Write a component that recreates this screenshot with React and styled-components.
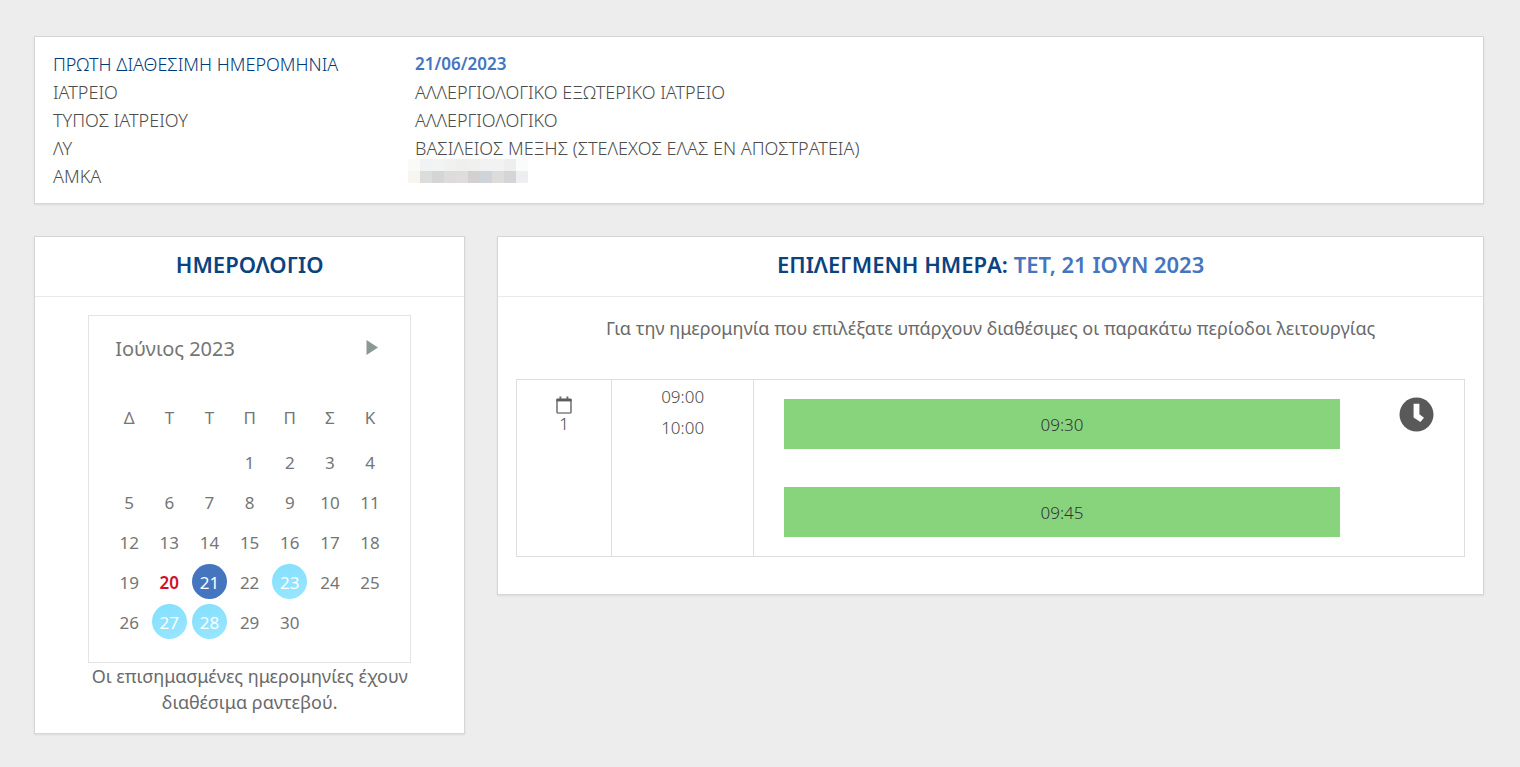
import React, { useState } from 'react';
import styled, { createGlobalStyle } from 'styled-components';

const GlobalStyle = createGlobalStyle`
  * {
    box-sizing: border-box;
  }
  body {
    margin: 0;
    background-color: #ededed;
    color: #4c4c4c;
    font-family: 'Noto Sans', 'Open Sans', sans-serif;
    font-size: 17px;
    font-weight: 300;
  }
  button {
    font: inherit;
    color: inherit;
    padding: 0;
    border: none;
    background: none;
    cursor: pointer;
  }
`;

const Page = styled.main`
  display: flex;
  flex-direction: column;
  gap: 32px;
  padding: 36px 36px 32px 34px;
`;

const Card = styled.section`
  background-color: #fff;
  border: 1px solid #d6d6d6;
  box-shadow: 0 1px 2px rgba(0, 0, 0, 0.08);
`;

const CardHeader = styled.h2`
  margin: 0;
  padding: 11px 18px 16px;
  border-bottom: 1px solid #e9e9e9;
  color: #0b4380;
  font-size: 22px;
  font-weight: 600;
  line-height: 32px;
  text-align: center;
`;

const SelectedDate = styled.span`
  color: #4675c0;
`;

const InfoList = styled.dl`
  margin: 0;
  padding: 13px 0;
`;

const InfoRow = styled.div`
  display: grid;
  grid-template-columns: 1fr 3fr;
  color: ${({ $main }) => ($main ? '#003a7a' : 'inherit')};
  font-size: 18px;
  line-height: 28px;
`;

const InfoLabel = styled.dt`
  padding-left: 18px;
`;

const InfoValue = styled.dd`
  margin: 0;
  padding-left: 18px;
  color: ${({ $main }) => ($main ? '#4675c0' : 'inherit')};
  font-size: ${({ $main }) => ($main ? '17px' : 'inherit')};
  font-weight: ${({ $main }) => ($main ? 600 : 300)};
`;

const Masked = styled.svg`
  display: block;
  margin: -3px 0 0 -7px;
`;

const Columns = styled.div`
  display: grid;
  grid-template-columns: minmax(360px, 431fr) 986fr;
  align-items: start;
  gap: 32px;
`;

const CardBody = styled.div`
  padding: ${({ $wide }) => ($wide ? '18px 18px 37px' : '18px')};
`;

const Calendar = styled.div`
  width: 323px;
  margin: 0 auto;
  padding: 17px 20px 21px;
  border: 1px solid #e3e3e3;
`;

const MonthBar = styled.div`
  display: flex;
  justify-content: space-between;
  align-items: center;
  height: 30px;
  margin-bottom: 33px;
  padding: 0 12px 0 6px;
  color: #757575;
  font-size: 20px;
  font-weight: 400;
`;

const NextButton = styled.button`
  display: flex;
`;

const Days = styled.table`
  width: 100%;
  table-layout: fixed;
  border-collapse: collapse;
  color: #757575;
  font-size: 17px;
  font-weight: 400;
  text-align: center;

  th,
  td {
    height: 40px;
    padding: 0;
    font-weight: 400;
  }
  th {
    height: 45px;
    padding-bottom: 3px;
  }
`;

const dayStyles = {
  today: 'color: #d0112b; font-weight: 600;',
  selected: 'color: #fff; background: #4675c0;',
  free: 'color: #fff; background: linear-gradient(160deg, #83dffe, #9ae6ff);',
};

const Day = styled.button`
  display: block;
  width: 35px;
  height: 35px;
  margin: 0 auto;
  padding-top: 2px;
  border-radius: 50%;
  line-height: 33px;
  ${({ $kind }) => dayStyles[$kind]}
`;

const Note = styled.p`
  margin: 0;
  color: #6a6a6a;
  font-size: 18px;
  font-weight: 400;
  line-height: 26px;
  text-align: center;
`;

const Schedule = styled.table`
  width: 100%;
  margin-top: 38px;
  table-layout: fixed;
  border-collapse: collapse;
  text-align: center;

  td {
    padding: 0;
    border: 1px solid #dedede;
    vertical-align: top;
  }
  td:nth-child(3) {
    border-right: none;
  }
  td:nth-child(4) {
    border-left: none;
  }
`;

const CountCell = styled.div`
  display: flex;
  flex-direction: column;
  align-items: center;
  padding-top: 16px;
  line-height: 20px;
`;

const Hours = styled.div`
  padding-top: 1px;
  line-height: 31px;
`;

const Slots = styled.div`
  display: flex;
  flex-direction: column;
  gap: 38px;
  padding: 19px 30px;
`;

const Slot = styled.button`
  height: 50px;
  background-color: #88d47d;
  color: #333;
`;

const ClockCell = styled.div`
  display: flex;
  justify-content: center;
  padding-top: 17px;
`;

const info = [
  { label: 'ΠΡΩΤΗ ΔΙΑΘΕΣΙΜΗ ΗΜΕΡΟΜΗΝΙΑ', value: '21/06/2023', main: true },
  { label: 'ΙΑΤΡΕΙΟ', value: 'ΑΛΛΕΡΓΙΟΛΟΓΙΚΟ ΕΞΩΤΕΡΙΚΟ ΙΑΤΡΕΙΟ' },
  { label: 'ΤΥΠΟΣ ΙΑΤΡΕΙΟΥ', value: 'ΑΛΛΕΡΓΙΟΛΟΓΙΚΟ' },
  { label: 'ΛΥ', value: 'ΒΑΣΙΛΕΙΟΣ ΜΕΞΗΣ (ΣΤΕΛΕΧΟΣ ΕΛΑΣ ΕΝ ΑΠΟΣΤΡΑΤΕΙΑ)' },
  { label: 'ΑΜΚΑ', value: null },
];

const maskColors = [
  ['#fafaf9', '#f0f2f4', '#f2f3f3', '#f1f1f0', '#efefee', '#f0f0f0', '#f2f2f2', '#f2f2f2', '#eeeeee', '#fafcfb'],
  ['#f8f5f0', '#dadddc', '#d5d5d6', '#dddbdc', '#dfdcde', '#d2d1cf', '#ced4da', '#dedcda', '#d5d5d7', '#eceef0'],
];

const weekdays = ['Δ', 'Τ', 'Τ', 'Π', 'Π', 'Σ', 'Κ'];

const weeks = [
  [null, null, null, 1, 2, 3, 4],
  [5, 6, 7, 8, 9, 10, 11],
  [12, 13, 14, 15, 16, 17, 18],
  [19, 20, 21, 22, 23, 24, 25],
  [26, 27, 28, 29, 30, null, null],
];

const freeDays = [21, 23, 27, 28];
const today = 20;

const MaskedNumber = () => (
  <Masked width="120" height="24" shapeRendering="crispEdges" aria-hidden="true">
    {maskColors.map((row, y) =>
      row.map((fill, x) => (
        <rect key={`${x}-${y}`} x={x * 12} y={y * 12} width="12" height="12" fill={fill} />
      ))
    )}
  </Masked>
);

const CalendarIcon = () => (
  <svg width="16" height="18" viewBox="0 0 16 18" fill="none" aria-hidden="true">
    <rect x="1" y="3.4" width="14" height="13.6" rx="1" stroke="#808080" strokeWidth="1.7" />
    <path d="M0.4 2.8h15.2v2.6H0.4z" fill="#5c5c5c" />
    <path d="M4.4 0.4v3M11.4 0.4v3" stroke="#6a6a6a" strokeWidth="1.9" />
  </svg>
);

const ClockIcon = () => (
  <svg width="35" height="35" viewBox="0 0 35 35" aria-hidden="true">
    <circle cx="17.5" cy="17.5" r="17" fill="#595959" />
    <path d="M14.6 6.8h5.8v10.4l4.6 3.6l-3.6 4.2l-6.8-4.4z" fill="#fff" />
  </svg>
);

const App = () => {
  const [selected, setSelected] = useState(21);

  const kindOf = (day) => {
    if (day === selected) return 'selected';
    if (day === today) return 'today';
    return freeDays.includes(day) ? 'free' : undefined;
  };

  return (
    <Page>
      <GlobalStyle />
      <Card>
        <InfoList>
          {info.map(({ label, value, main }) => (
            <InfoRow key={label} $main={main}>
              <InfoLabel>{label}</InfoLabel>
              <InfoValue $main={main}>{value || <MaskedNumber />}</InfoValue>
            </InfoRow>
          ))}
        </InfoList>
      </Card>

      <Columns>
        <Card>
          <CardHeader>ΗΜΕΡΟΛΟΓΙΟ</CardHeader>
          <CardBody>
            <Calendar>
              <MonthBar>
                <span>Ιούνιος 2023</span>
                <NextButton type="button" aria-label="Επόμενος μήνας">
                  <svg width="12" height="16" viewBox="0 0 12 16">
                    <path d="M0.5 0L12 7.5L0.5 15z" fill="#8a9896" />
                  </svg>
                </NextButton>
              </MonthBar>
              <Days>
                <thead>
                  <tr>
                    {weekdays.map((name, index) => (
                      <th key={index} scope="col">{name}</th>
                    ))}
                  </tr>
                </thead>
                <tbody>
                  {weeks.map((week, index) => (
                    <tr key={index}>
                      {week.map((day, i) => (
                        <td key={i}>
                          {day && (
                            <Day
                              type="button"
                              $kind={kindOf(day)}
                              onClick={() => freeDays.includes(day) && setSelected(day)}
                            >
                              {day}
                            </Day>
                          )}
                        </td>
                      ))}
                    </tr>
                  ))}
                </tbody>
              </Days>
            </Calendar>
            <Note>
              Οι επισημασμένες ημερομηνίες έχουν
              <br />
              διαθέσιμα ραντεβού.
            </Note>
          </CardBody>
        </Card>

        <Card>
          <CardHeader>
            ΕΠΙΛΕΓΜΕΝΗ ΗΜΕΡΑ: <SelectedDate>ΤΕΤ, 21 ΙΟΥΝ 2023</SelectedDate>
          </CardHeader>
          <CardBody $wide>
            <Note>
              Για την ημερομηνία που επιλέξατε υπάρχουν διαθέσιμες οι παρακάτω περίοδοι λειτουργίας
            </Note>
            <Schedule>
              <colgroup>
                <col width="10%" />
                <col width="15%" />
                <col width="65%" />
                <col width="10%" />
              </colgroup>
              <tbody>
                <tr>
                  <td>
                    <CountCell>
                      <CalendarIcon />
                      1
                    </CountCell>
                  </td>
                  <td>
                    <Hours>
                      09:00
                      <br />
                      10:00
                    </Hours>
                  </td>
                  <td>
                    <Slots>
                      <Slot type="button">09:30</Slot>
                      <Slot type="button">09:45</Slot>
                    </Slots>
                  </td>
                  <td>
                    <ClockCell>
                      <ClockIcon />
                    </ClockCell>
                  </td>
                </tr>
              </tbody>
            </Schedule>
          </CardBody>
        </Card>
      </Columns>
    </Page>
  );
};

export default App;
